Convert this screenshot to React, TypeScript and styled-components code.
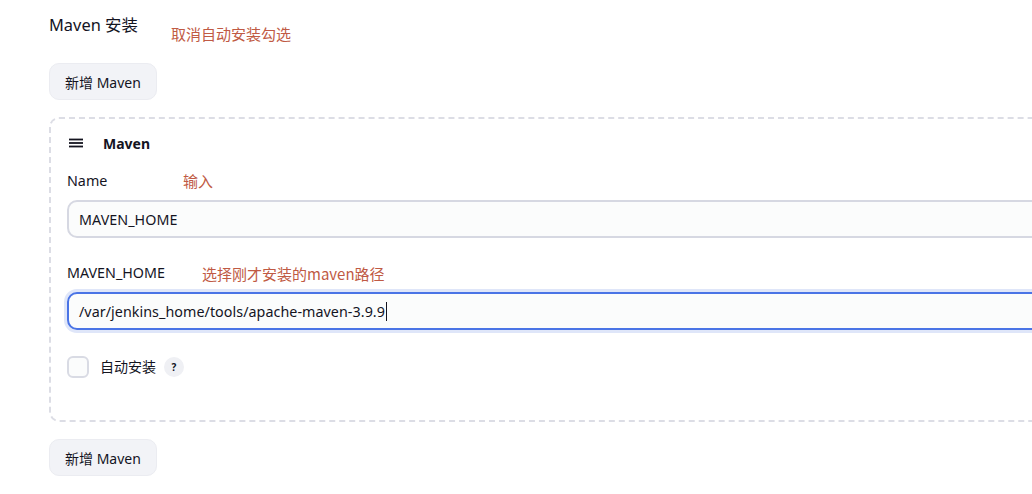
import React from "react";
import styled, { createGlobalStyle } from "styled-components";

const Global = createGlobalStyle`
  html, body {
    margin: 0;
    padding: 0;
    background: #ffffff;
    overflow: hidden;
  }
  body {
    font-family: "Noto Sans", "Noto Sans CJK SC", sans-serif;
    font-size: 14px;
    color: #14141f;
  }
`;

const Page = styled.div`
  width: 1032px;
  height: 494px;
  padding: 13px 0 0 49px;
  box-sizing: border-box;
  display: flex;
  flex-direction: column;
  align-items: flex-start;
`;

const LabelRow = styled.div<{ $h?: number }>`
  position: relative;
  display: flex;
  align-items: center;
  height: ${(p) => p.$h ?? 20}px;
`;

const Title = styled.h2`
  margin: 0;
  font-size: 16.4px;
  font-weight: 400;
  line-height: 24px;
  color: #14141f;
`;

const Note = styled.span<{ $left: number; $dy?: number }>`
  position: absolute;
  left: ${(p) => p.$left}px;
  top: ${(p) => p.$dy ?? 0}px;
  white-space: nowrap;
  font-family: "Noto Sans CJK SC", "Noto Sans", sans-serif;
  font-size: 15px;
  line-height: 20px;
  color: #c05a44;
`;

const AddButton = styled.button<{ $mt: number }>`
  margin-top: ${(p) => p.$mt}px;
  height: 37px;
  padding: 0 15px;
  border: 1px solid #ebecf1;
  border-radius: 10px;
  background: #f2f3f7;
  font-family: inherit;
  font-size: 14px;
  color: #14141f;
  cursor: pointer;
`;

const Panel = styled.section`
  margin-top: 17px;
  width: 1100px;
  box-sizing: border-box;
  border: 2px dashed #dcdde5;
  border-radius: 10px;
  padding: 14px 0 42px 16px;
  display: flex;
  flex-direction: column;
  align-items: flex-start;
`;

const PanelHeader = styled.div`
  display: flex;
  align-items: center;
  height: 20px;
  gap: 19px;
  padding-left: 1px;
  font-weight: 700;
  font-size: 14px;
`;

const FieldLabel = styled.label`
  font-size: 14.3px;
  line-height: 20px;
  color: #14141f;
`;

const Field = styled.div<{ $mt: number }>`
  margin-top: ${(p) => p.$mt}px;
  display: flex;
  flex-direction: column;
  gap: 9px;
  width: 100%;
`;

const TextBox = styled.div<{ $focused?: boolean }>`
  height: 38px;
  box-sizing: border-box;
  padding: 0 10px;
  display: flex;
  align-items: center;
  border: 2px solid ${(p) => (p.$focused ? "#4a74e6" : "#d6d8e2")};
  border-radius: 10px;
  background: #fbfcfc;
  box-shadow: ${(p) => (p.$focused ? "0 0 0 3px #dfe6f9" : "none")};
  font-size: 14.3px;
  letter-spacing: 0.05px;
  color: #14141f;
  white-space: nowrap;
`;

const Caret = styled.span`
  display: inline-block;
  width: 1px;
  height: 19px;
  background: #14141f;
  margin-left: 1px;
`;

const CheckRow = styled.div`
  margin-top: 26px;
  display: flex;
  align-items: center;
  height: 22px;
`;

const CheckBox = styled.span`
  width: 22px;
  height: 22px;
  box-sizing: border-box;
  border: 2px solid #d9dbe4;
  border-radius: 6px;
  background: #fbfcfc;
`;

const CheckLabel = styled.span`
  margin-left: 11px;
  font-size: 14px;
  line-height: 20px;
`;

const Help = styled.span`
  margin-left: 8px;
  width: 20px;
  height: 20px;
  border-radius: 50%;
  background: #eff0f4;
  display: flex;
  align-items: center;
  justify-content: center;
  font-size: 10px;
  font-weight: 700;
  color: #14141f;
`;

const Grip = () => (
  <svg width="16" height="12" viewBox="0 0 16 12" aria-hidden>
    <g stroke="#14141f" strokeWidth="1.8" strokeLinecap="butt">
      <line x1="1" y1="2.5" x2="15" y2="2.5" />
      <line x1="1" y1="6" x2="15" y2="6" />
      <line x1="1" y1="9.5" x2="15" y2="9.5" />
    </g>
  </svg>
);

export default function App() {
  return (
    <>
      <Global />
      <Page>
        <LabelRow $h={24}>
          <Title>Maven 安装</Title>
          <Note $left={122} $dy={11}>取消自动安装勾选</Note>
        </LabelRow>
        <AddButton $mt={26}>新增 Maven</AddButton>
        <Panel>
          <PanelHeader>
            <Grip />
            <span>Maven</span>
          </PanelHeader>
          <Field $mt={18}>
            <LabelRow>
              <FieldLabel>Name</FieldLabel>
              <Note $left={116} $dy={0}>输入</Note>
            </LabelRow>
            <TextBox>MAVEN_HOME</TextBox>
          </Field>
          <Field $mt={25}>
            <LabelRow>
              <FieldLabel>MAVEN_HOME</FieldLabel>
              <Note $left={135} $dy={1}>选择刚才安装的maven路径</Note>
            </LabelRow>
            <TextBox $focused>
              /var/jenkins_home/tools/apache-maven-3.9.9
              <Caret />
            </TextBox>
          </Field>
          <CheckRow>
            <CheckBox />
            <CheckLabel>自动安装</CheckLabel>
            <Help>?</Help>
          </CheckRow>
        </Panel>
        <AddButton $mt={17}>新增 Maven</AddButton>
      </Page>
    </>
  );
}
